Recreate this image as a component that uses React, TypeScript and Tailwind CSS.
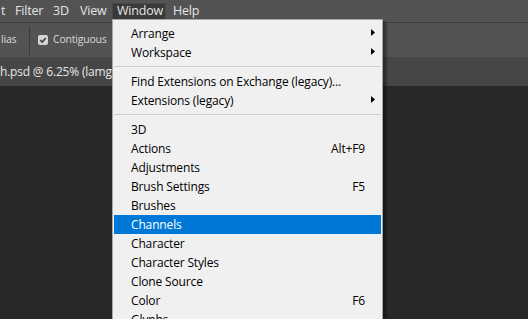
import React from "react";

type Row =
  | { label: string; shortcut?: string; sub?: boolean; active?: boolean }
  | "sep";

const rows: Row[] = [
  { label: "Arrange", sub: true },
  { label: "Workspace", sub: true },
  "sep",
  { label: "Find Extensions on Exchange (legacy)..." },
  { label: "Extensions (legacy)", sub: true },
  "sep",
  { label: "3D" },
  { label: "Actions", shortcut: "Alt+F9" },
  { label: "Adjustments" },
  { label: "Brush Settings", shortcut: "F5" },
  { label: "Brushes" },
  { label: "Channels", active: true },
  { label: "Character" },
  { label: "Character Styles" },
  { label: "Clone Source" },
  { label: "Color", shortcut: "F6" },
  { label: "Glyphs" },
];

function SubArrow() {
  return (
    <svg width="4" height="7" viewBox="0 0 4 7" className="-mt-[2px]">
      <path d="M0 0L4 3.5L0 7Z" fill="#000" />
    </svg>
  );
}

function WindowMenu() {
  return (
    <div className="absolute left-[112px] top-[19px] w-[271px] bg-[#f0f0f0] border border-[#a7a7a7] pt-[4px] shadow-[3px_3px_3px_rgba(0,0,0,0.45)] text-[12px] tracking-[-0.15px] text-black">
      {rows.map((r, i) =>
        r === "sep" ? (
          <div key={i} className="mx-[1px] mt-[4px] mb-[5px] h-px bg-[#cdcdcd]" />
        ) : (
          <div
            key={i}
            className={`mx-[1px] h-[19px] flex items-center pl-[17px] ${
              r.sub ? "pr-[6px]" : "pr-[16px]"
            } ${r.active ? "bg-[#0078d7] text-white" : ""}`}
          >
            <span className="whitespace-nowrap">{r.label}</span>
            <span className="ml-auto">
              {r.sub ? <SubArrow /> : r.shortcut}
            </span>
          </div>
        )
      )}
    </div>
  );
}

export default function App() {
  return (
    <div className="relative w-[528px] h-[319px] overflow-hidden bg-[#282828] font-['Open_Sans',sans-serif] flex flex-col">
      <div className="h-[22px] bg-[#535353] flex items-stretch text-[12.5px] tracking-[-0.2px] text-[#e4e4e4]">
        <div className="w-[15px] pl-[1px] flex items-center">t</div>
        <div className="w-[38px] flex items-center">Filter</div>
        <div className="w-[27px] flex items-center">3D</div>
        <div className="w-[32px] flex items-center">View</div>
        <div className="w-[54px] mt-[3px] pl-[4px] flex items-center pb-[3px] bg-[#3a3a3a] border-t border-x border-[#474747]">
          Window
        </div>
        <div className="ml-[7px] flex items-center">Help</div>
      </div>
      <div className="h-px bg-[#3d3d3d]" />
      <div className="h-[34px] bg-[#535353] flex items-center text-[10.5px] tracking-[-0.2px] text-[#d8d8d8]">
        <div className="w-[29px] pl-[1px]">lias</div>
        <div className="w-px h-[29px] bg-[#3b3b3b]" />
        <div className="ml-[8px] w-[10px] h-[10px] rounded-[2px] bg-[#d4d4d4] flex items-center justify-center">
          <svg width="8" height="8" viewBox="0 0 8 8">
            <path d="M1.3 4.2L3.2 6L6.8 2" stroke="#404040" strokeWidth="1.6" fill="none" />
          </svg>
        </div>
        <div className="ml-[5px]">Contiguous</div>
      </div>
      <div className="h-[29px] bg-[#464646] flex items-center text-[12px] tracking-[-0.2px] text-[#e6e6e6] whitespace-nowrap">
        <span>h.psd @ 6.25% (lamge, RGB/8)</span>
      </div>
      <div className="flex-1 bg-[#282828]" />
      <WindowMenu />
    </div>
  );
}
